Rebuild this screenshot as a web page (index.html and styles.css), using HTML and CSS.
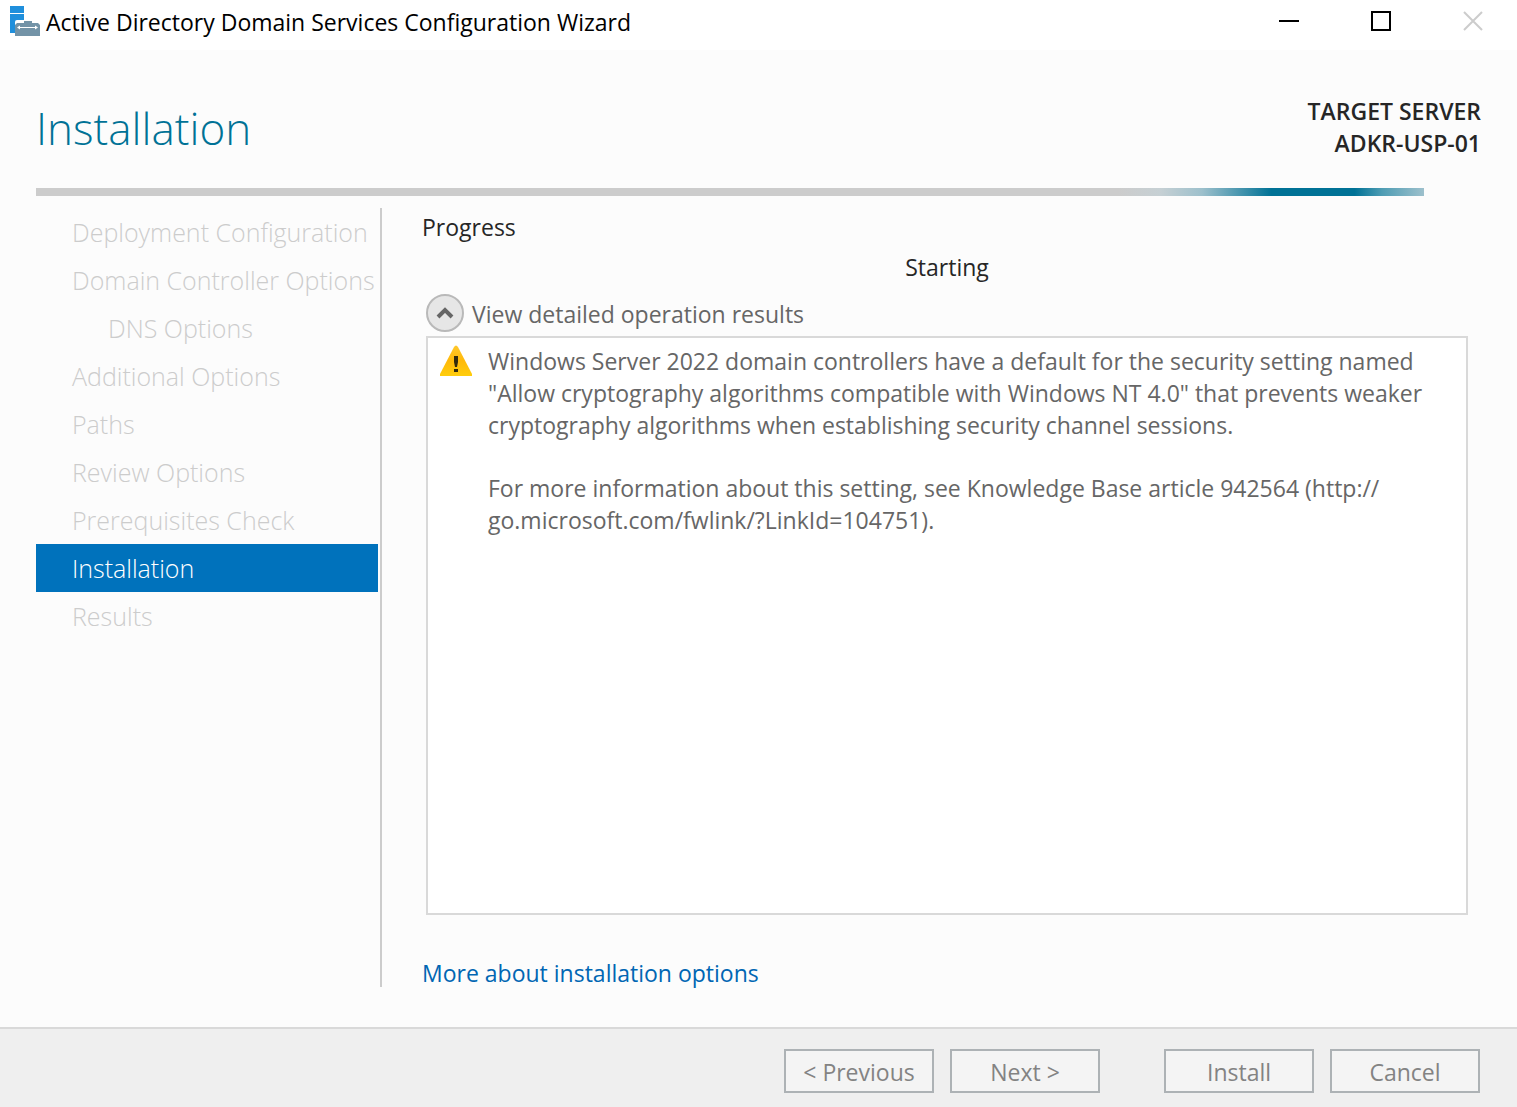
FILE: index.html
```html
<!DOCTYPE html>
<html lang="en">
<head>
    <meta charset="UTF-8">
    <meta name="viewport" content="width=device-width, initial-scale=1">
    <title>Active Directory Domain Services Configuration Wizard</title>
    <link rel="stylesheet" href="styles.css">
</head>
<body>

    <div class="titlebar">
        <svg class="titlebar__icon" width="32" height="32" viewBox="0 0 32 32" aria-hidden="true">
            <path fill="#1f8fdc" d="M1 2h14v7H1zM1 10h14v6H8q-2 0-2 2v11H1z"/>
            <path fill="#7393a7" d="M15 19v-2h8v2h6l2 2v11H6V21l2-2z"/>
            <path fill="#fff" d="M8 23.500l3-2v1.500h15v-1.500l3 2-3 2v-1.500H11v1.500z"/>
        </svg>
        <span class="titlebar__text">Active Directory Domain Services Configuration Wizard</span>
        <div class="titlebar__buttons">
            <button type="button" aria-label="Minimize">
                <svg width="20" height="20" viewBox="0 0 20 20"><path d="M0 10h20"/></svg>
            </button>
            <button type="button" aria-label="Maximize">
                <svg width="20" height="20" viewBox="0 0 20 20"><path d="M1 1h18v18H1z"/></svg>
            </button>
            <button type="button" aria-label="Close" disabled>
                <svg width="20" height="20" viewBox="0 0 20 20"><path d="M1 1l18 18M19 1L1 19"/></svg>
            </button>
        </div>
    </div>

    <header class="header">
        <h1>Installation</h1>
        <p class="header__server">TARGET SERVER<br>ADKR-USP-01</p>
    </header>
    <div class="progress" role="progressbar" aria-label="Installation progress"></div>

    <div class="wizard">
        <ol class="steps">
            <li>Deployment Configuration</li>
            <li>Domain Controller Options</li>
            <li class="steps__sub">DNS Options</li>
            <li>Additional Options</li>
            <li>Paths</li>
            <li>Review Options</li>
            <li>Prerequisites Check</li>
            <li class="steps__current" aria-current="step">Installation</li>
            <li>Results</li>
        </ol>

        <main class="content">
            <h2>Progress</h2>
            <p class="content__status">Starting</p>
            <button type="button" class="expander" aria-expanded="true" aria-controls="results">
                <svg width="38" height="38" viewBox="0 0 38 38" aria-hidden="true">
                    <circle cx="19" cy="19" r="18" fill="#e6e6e6" stroke="#b9b9b9" stroke-width="2"/>
                    <path d="M12 23l7-7 7 7" fill="none" stroke="#666" stroke-width="4"/>
                </svg>
                <span>View detailed operation results</span>
            </button>
            <div class="results" id="results">
                <svg class="results__icon" width="32" height="32" viewBox="0 0 32 32" role="img" aria-label="Warning">
                    <defs>
                        <linearGradient id="warn" x1="0" y1="0" x2="0" y2="1">
                            <stop offset="0" stop-color="#ffc82c"/>
                            <stop offset="0.5" stop-color="#ffb90a"/>
                            <stop offset="1" stop-color="#ffcd0c"/>
                        </linearGradient>
                    </defs>
                    <path fill="url(#warn)" d="M14 2q2-3 4 0l14 27v2H0v-2z"/>
                    <path fill="#322a0c" d="M14 11h4v6l-1 5h-2l-1-5zM14 24h4v3h-4z"/>
                </svg>
                <div class="results__text">
                    <p>Windows Server 2022 domain controllers have a default for the security setting named<br>
                    "Allow cryptography algorithms compatible with Windows NT 4.0" that prevents weaker<br>
                    cryptography algorithms when establishing security channel sessions.</p>
                    <p>For more information about this setting, see Knowledge Base article 942564 (http://<br>
                    go.microsoft.com/fwlink/?LinkId=104751).</p>
                </div>
            </div>
            <a class="content__more" href="#">More about installation options</a>
        </main>
    </div>

    <footer class="footer">
        <button type="button" disabled>&lt; Previous</button>
        <button type="button" disabled>Next &gt;</button>
        <button type="button" class="footer__install" disabled>Install</button>
        <button type="button" disabled>Cancel</button>
    </footer>

</body>
</html>
```
FILE: styles.css
```css
*,
*::before,
*::after {
  box-sizing: border-box;
}

h1,
h2,
p,
ol {
  margin: 0;
  padding: 0;
}

ol {
  list-style: none;
}

button {
  border: 0;
  background-color: transparent;
  font: inherit;
  padding: 0;
}

svg {
  display: block;
  flex: none;
}

body {
  background-color: #fcfcfc;
  color: #262626;
  display: flex;
  flex-direction: column;
  font-family: "Segoe UI", "Open Sans", "Noto Sans", sans-serif;
  font-size: 23px;
  line-height: 32px;
  margin: 0;
  min-height: 100vh;
}

/* Title bar */

.titlebar {
  align-items: flex-start;
  background-color: #fff;
  color: #000;
  display: flex;
  height: 50px;
  padding: 4px 0 0 9px;
}

.titlebar__text {
  flex: 1;
  line-height: 36px;
  margin-left: 5px;
}

.titlebar__buttons {
  display: flex;
  margin-right: -2px;
}

.titlebar__buttons button {
  display: flex;
  justify-content: center;
  padding: 7px 0;
  width: 92px;
}

.titlebar__buttons path {
  fill: none;
  stroke: #000;
  stroke-width: 2;
}

.titlebar__buttons button:disabled path {
  stroke: #ccc;
}

/* Header */

.header {
  align-items: flex-start;
  display: flex;
  justify-content: space-between;
  padding: 45px 36px 27px;
}

h1 {
  color: #007296;
  font-size: 44px;
  font-weight: 300;
  line-height: 66px;
}

.header__server {
  font-weight: 600;
  text-align: right;
}

.progress {
  background: linear-gradient(to right, #ccc 78%, #c6d0d4 81%, #9dc0cc 84%, #007296 89%, #007296 95%, #4f9db4 97%, #9dc0cc 100%);
  height: 8px;
  margin: 0 93px 0 36px;
}

/* Steps and content */

.wizard {
  display: flex;
  flex: 1;
  padding: 12px 49px 40px 36px;
}

.steps {
  border-right: 2px solid #ccc;
  color: #ccc;
  flex: none;
  font-size: 25px;
  font-weight: 300;
  line-height: 48px;
  padding-right: 2px;
  white-space: nowrap;
  width: 346px;
}

.steps li {
  padding-left: 36px;
}

.steps .steps__sub {
  padding-left: 72px;
}

.steps .steps__current {
  background-color: #0072bc;
  color: #fff;
}

.content {
  display: flex;
  flex: 1;
  flex-direction: column;
  padding: 3px 0 0 44px;
}

h2 {
  font-size: inherit;
  font-weight: 400;
  margin-left: -4px;
}

.content__status {
  margin-top: 8px;
  text-align: center;
}

.expander {
  align-items: center;
  align-self: flex-start;
  color: #666;
  display: flex;
  gap: 8px;
  margin: 11px 0 4px;
}

.expander span {
  padding-top: 2px;
}

.results {
  align-items: flex-start;
  background-color: #fff;
  border: 2px solid #d9d9d9;
  color: #666;
  display: flex;
  flex: 1;
  gap: 16px;
  padding: 7px 12px;
}

.results__text p + p {
  margin-top: 31px;
}

.content__more {
  align-self: flex-start;
  color: #0066b3;
  line-height: 28px;
  margin: 44px 0 0 -4px;
  text-decoration: none;
}

/* Footer */

.footer {
  background-color: #efefef;
  border-top: 2px solid #d9d9d9;
  display: flex;
  gap: 16px;
  justify-content: flex-end;
  padding: 20px 37px 14px;
}

.footer button {
  background-color: #f4f4f4;
  border: 2px solid #adb2b5;
  color: #838383;
  height: 44px;
  padding-top: 2px;
  width: 150px;
}

.footer .footer__install {
  margin-left: 48px;
}
```
